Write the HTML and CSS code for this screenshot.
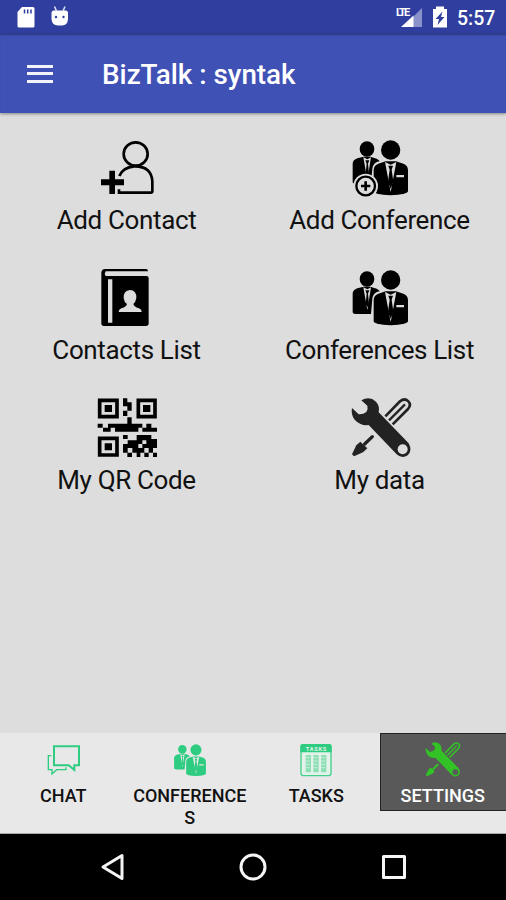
FILE: index.html
```
<!DOCTYPE html>
<html lang="en">
<head>
  <meta charset="UTF-8" />
  <meta name="viewport" content="width=device-width, initial-scale=1.0" />
  <title>BizTalk</title>
  <link rel="stylesheet" href="styles.css">
</head>
<body>

  <!-- shared icons -->
  <svg class="sprite" aria-hidden="true">
    <symbol id="people" viewBox="208 27 180 180">
      <g fill="currentColor">
        <ellipse cx="259" cy="57" rx="22" ry="23" />
        <path d="M216 100Q217 90 230 85L249 80H269L288 86Q295 89 297 94Q278 97 275 116L271 162H228Q216 162 216 156Z" />
        <ellipse cx="330" cy="60" rx="29" ry="29" />
        <path d="M279 120Q280 105 293 101L315 94H346L368 101Q381 105 382 120V184Q380 194 330 196Q280 194 279 184Z" />
      </g>
      <path class="cut" d="M248 82L260 150L271 82L260 88ZM313 96L330 186L347 96L330 104ZM347 135H370V142H347Z" />
      <path fill="currentColor" d="M254 91H266L262 101L265 132L260 142L255 132L258 101ZM323 107H337L333 119L338 155L330 176L322 155L327 119Z" />
    </symbol>
    <symbol id="tools" viewBox="88 39 180 180" overflow="visible">
      <path fill="currentColor" d="M122 45Q147 31 166 49Q178 62 174 81L264 174Q276 196 261 210Q244 222 228 207L144 119Q119 122 102 103Q90 88 94 68L114 87Q128 88 137 80Q143 70 140 61Z" />
      <circle class="cut" cx="246" cy="192" r="15" />
      <g fill="none" stroke="currentColor">
        <path stroke-width="8" d="M194 93L238 48Q252 37 263 48Q273 58 262 71L216 117" />
        <path stroke-width="7" d="M205 105L253 57" />
        <path stroke-width="10" stroke-linecap="round" d="M155 154L132 176" />
      </g>
      <path fill="currentColor" d="M119 169L140 189L127 201L100 213L94 207L107 180Z" />
    </symbol>
  </svg>

  <div class="status-bar">
    <svg class="status-left" width="60" height="34" viewBox="0 0 60 34">
      <path fill="#fff" d="M22 7H33Q34.500 7 34.500 8.500V26Q34.500 27.500 33 27.500H19Q17.500 27.500 17.500 26V12Z" />
      <path stroke="#303f9f" stroke-width="1.500" d="M24.500 9.500V13.500M27.700 9.500V13.500M31 9.500V13.500" />
    </svg>
    <svg class="status-droid" width="22" height="34" viewBox="49 0 22 34">
      <path fill="#fff" d="M51.500 13Q51.500 10.500 54 10.500H65.500Q68 10.500 68 13V19Q67.500 25.500 62 25.500H58Q52 25.500 51.500 19Z" />
      <path stroke="#d8dcf4" stroke-width="1.600" d="M54.500 6.500L56.500 11M65 6.500L63 11" />
      <circle cx="56" cy="17" r="1.200" fill="#303f9f" />
      <circle cx="63.500" cy="17" r="1.200" fill="#303f9f" />
    </svg>
    <span class="lte">LTE</span>
    <svg class="status-right" width="56" height="34" viewBox="395 0 56 34">
      <path fill="#8992cb" d="M422 8V27H413V17Z" />
      <path fill="#fff" d="M413.500 15.500V27H401Z" />
      <path fill="#fff" d="M433 9H436V6.500H444V9H447V27.500H433Z" />
      <path fill="#303f9f" d="M442.500 11.500L435.500 19H439L437.500 25L444.500 17H441Z" />
    </svg>
    <span class="clock">5:57</span>
  </div>

  <header class="app-bar">
    <div class="menu-btn"><span></span><span></span><span></span></div>
    <h1>BizTalk : syntak</h1>
  </header>

  <main class="menu">
    <div class="menu-item">
      <svg class="icon" viewBox="170 27 180 180">
        <g fill="none" stroke="#000" stroke-width="8">
          <ellipse cx="286" cy="72" rx="36" ry="35" />
          <path d="M237 138Q247 112 282 109Q334 108 336 155V184Q336 188 331 188H236V178" />
        </g>
        <path d="M207 122H224V148H251V166H224V192H207V166H182V148H207Z" />
      </svg>
      <span>Add Contact</span>
    </div>
    <div class="menu-item">
      <svg class="icon" viewBox="208 27 180 180">
        <use href="#people" x="208" y="27" width="180" height="180" />
        <circle class="cut" cx="255" cy="168" r="37" />
        <circle cx="255" cy="168" r="28" fill="none" stroke="#000" stroke-width="7" />
        <path stroke="#000" stroke-width="8" d="M255 154V182M241 168H269" />
      </svg>
      <span>Add Conference</span>
    </div>
    <div class="menu-item">
      <svg class="icon" viewBox="170 27 180 180">
        <path d="M195 27H317Q323 27 323 34H196Q191 41 196 48H318Q325 48 325 54V190Q325 198 317 198H191Q183 198 183 190V39Q183 27 195 27Z" />
        <path class="cut" d="M203 58H216V188H203ZM269 90Q289 91 288 114Q286 126 279 132Q282 141 294 144Q304 147 304 156H235Q235 147 245 144Q257 141 260 132Q251 126 250 114Q249 92 269 90Z" />
      </svg>
      <span>Contacts List</span>
    </div>
    <div class="menu-item">
      <svg class="icon" viewBox="208 27 180 180">
        <use href="#people" x="208" y="27" width="180" height="180" />
      </svg>
      <span>Conferences List</span>
    </div>
    <div class="menu-item">
      <svg class="icon" viewBox="170 41 180 180">
        <g fill="none" stroke="#000" stroke-width="11">
          <path d="M178 45H230V94H178ZM294 45H344V94H294ZM178 159H230V209H178Z" />
        </g>
        <path d="M193 59H215V80H193ZM308 59H330V80H308ZM193 174H215V195H193Z" />
        <path d="M248 39H261V51H274V76H261V92H248V76H261V63H248ZM261 96H274V115H306V127H318V115H333V127H350V139H306V127H294V139H224V127H211V139H188V127H203V115H261ZM172 115H187V127H172ZM248 149H262V161H248ZM289 149H333V161H350V188H338V202H325V215H312V202H300V215H289V202H276V188H262V202H248V176H262V165H289ZM261 202H275V215H261ZM338 202H350V215H338Z" />
        <path class="cut" d="M306 165H318V176H306ZM294 176H306V188H294ZM312 188H325V202H312Z" />
      </svg>
      <span>My QR Code</span>
    </div>
    <div class="menu-item data">
      <svg class="icon" viewBox="88 41 180 180">
        <use href="#tools" x="88" y="39" width="180" height="180" />
      </svg>
      <span>My data</span>
    </div>
  </main>

  <nav class="tab-bar">
    <div class="tab-item">
      <svg class="tab-icon" viewBox="136 51 108 108">
        <g fill="none" stroke="#2ecc80">
          <path stroke-width="6" d="M163 64H238V121H224V135L207 121H163Z" />
          <path stroke-width="4" d="M155 92H146V134H157V147L171 134H199V127" />
        </g>
      </svg>
      Chat
    </div>
    <div class="tab-item">
      <svg class="tab-icon" viewBox="0 0 108 108">
        <use href="#people" x="1.700" y="4.600" width="103.500" height="103.500" />
      </svg>
      Conferences
    </div>
    <div class="tab-item">
      <svg class="tab-icon" viewBox="138 51 108 108">
        <rect x="147" y="59" width="90" height="93" rx="7" fill="#e4f3ea" stroke="#45cf8c" stroke-width="4" />
        <path fill="#2ecc80" d="M145 82V65Q145 57 153 57H231Q239 57 239 65V82Z" />
        <text class="tasks-title" x="192" y="77" textLength="62">TASKS</text>
        <path stroke="#8fdfb7" stroke-width="16" d="M169 90V142M192 90V142M215 90V142" />
        <path stroke="#e4f3ea" stroke-width="2" d="M161 98H173M161 108H173M161 118H173M161 128H173M184 98H196M184 108H196M184 118H196M184 128H196M207 98H219M207 108H219M207 118H219M207 128H219" />
      </svg>
      Tasks
    </div>
    <div class="tab-item active">
      <svg class="tab-icon" viewBox="0 0 108 108">
        <use href="#tools" x="-1" y="1" width="105" height="105" />
      </svg>
      Settings
    </div>
  </nav>

  <footer class="nav-bar">
    <svg viewBox="0 0 28 28"><path d="M4 14L23 2.500V25.500Z" /></svg>
    <svg viewBox="0 0 28 28"><circle cx="14" cy="14" r="12" /></svg>
    <svg viewBox="0 0 28 28"><rect x="3.500" y="3.500" width="21" height="21" /></svg>
  </footer>

</body>
</html>
```
FILE: styles.css
```
:root {
  --bg: #dddddd;
  --tab-bg: #e8e8e8;
  --green: #2ecc80;
}
* {
  box-sizing: border-box;
}
body {
  margin: 0;
  height: 900px;
  display: flex;
  flex-direction: column;
  background: var(--bg);
  font-family: Roboto, sans-serif;
  color: #111;
  overflow: hidden;
}
.sprite {
  position: absolute;
  width: 0;
  height: 0;
}
.cut {
  fill: var(--bg);
}
.status-bar {
  display: flex;
  flex: none;
  height: 34px;
  background: #303f9f;
  color: #fff;
}
.status-left {
  margin-right: -11px;
}
.lte {
  margin-left: auto;
  margin-right: -15px;
  padding-top: 6px;
  width: 14px;
  font-size: 11px;
  line-height: 13px;
  font-weight: 700;
  letter-spacing: -1.8px;
}
.clock {
  width: 55px;
  padding-left: 6px;
  font-size: 19.5px;
  font-weight: 500;
  line-height: 37px;
}
.app-bar {
  display: flex;
  flex: none;
  align-items: center;
  height: 79px;
  padding: 0 27px;
  background: #3f51b5;
  box-shadow: 0 1px 3px rgba(0,0,0,0.4), inset 0 2px 2px -1px rgba(0,0,0,0.3);
  color: #fff;
}
.menu-btn {
  display: flex;
  flex-direction: column;
  gap: 4.5px;
  width: 26px;
  margin-right: 49px;
}
.menu-btn span {
  height: 3px;
  background: #f2f3fb;
}
.app-bar h1 {
  margin: 2px 0 0;
  font-size: 27.8px;
  font-weight: 500;
}
.menu {
  flex: 1;
  display: grid;
  grid-template-columns: 1fr 1fr;
  grid-auto-rows: 130px;
  padding-top: 26px;
}
.menu-item {
  display: flex;
  flex-direction: column;
  align-items: center;
  font-size: 26px;
  line-height: 30px;
  letter-spacing: -0.36px;
  white-space: nowrap;
}
.icon {
  width: 60px;
  height: 60px;
  margin-bottom: 6px;
  color: #000;
  overflow: visible;
}
.data .icon {
  color: #222;
}
.tab-bar {
  display: flex;
  flex: none;
  align-items: flex-start;
  height: 101px;
  background: var(--tab-bg);
  border-bottom: 1px solid #aaa;
}
.tab-item {
  --bg: var(--tab-bg);
  display: flex;
  flex-direction: column;
  align-items: center;
  flex: 1 1 0;
  min-width: 0;
  min-height: 78px;
  padding: 9px 6px 0;
  font-size: 18px;
  font-weight: 500;
  line-height: 21.5px;
  text-align: center;
  text-transform: uppercase;
  overflow-wrap: anywhere;
}
.tab-item.active {
  --bg: #595959;
  background: #595959;
  border: 1px solid #222;
  border-width: 1px 0 1px 1px;
  padding: 8px 6px 0 5px;
  color: #fff;
}
.tab-icon {
  width: 36px;
  height: 36px;
  margin-bottom: 7px;
  color: var(--green);
  overflow: visible;
}
.active .tab-icon {
  color: #32c226;
}
.tasks-title {
  font-size: 17px;
  font-weight: 700;
  text-anchor: middle;
  fill: #e4f3ea;
}
.nav-bar {
  display: flex;
  flex: none;
  justify-content: center;
  align-items: center;
  gap: 112.5px;
  height: 66px;
  background: #000;
}
.nav-bar svg {
  width: 28px;
  height: 28px;
  fill: none;
  stroke: #f5f5f5;
  stroke-width: 3;
  stroke-linejoin: round;
}
```
